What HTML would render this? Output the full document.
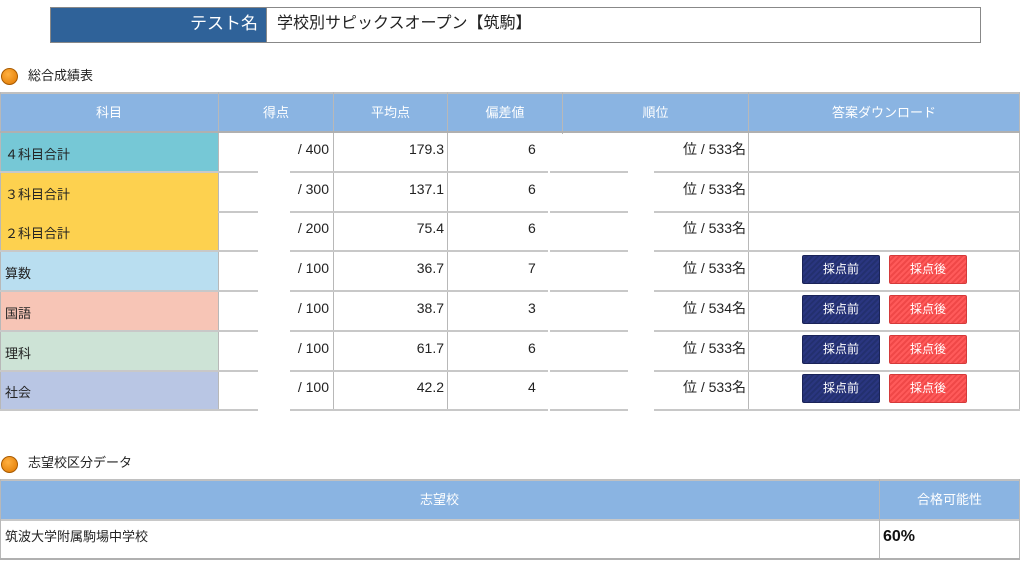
<!DOCTYPE html><html><head><meta charset="utf-8"><style>
body{margin:0;width:1024px;height:563px;background:#fff;font-family:"Liberation Sans","Noto Sans CJK JP",sans-serif;position:relative;overflow:hidden;color:#222}
.a{position:absolute;box-sizing:border-box;line-height:16px}
.h{background:#8ab4e2;color:#fff;font-size:13px;text-align:center;line-height:38px}
.n{font-size:14px;text-align:right}
.r{font-size:14px}
.hl{position:absolute;height:2px;background:#c8c8c8}
.vl{position:absolute;width:1px;background:#b8b8b8}
.btn{position:absolute;width:76px;height:27px;font-size:12px;color:#fff;text-align:center;line-height:27px;border-radius:2px}
.b1{background:repeating-linear-gradient(135deg,#2a3680 0 2px,#23306f 2px 4px);border:1px solid #1a2358}
.b2{background:repeating-linear-gradient(135deg,#ff5a5a 0 2px,#f04848 2px 4px);border:1px solid #d43a3a}
.dot{position:absolute;width:17px;height:17px;border-radius:50%;background:radial-gradient(circle at 40% 35%,#ffb040,#e07800);border:1px solid #a85a00;box-sizing:border-box}
</style></head><body>
<div class="a" style="left:50px;top:7px;width:931px;height:36px;border:1px solid #888"></div>
<div class="a" style="left:51px;top:8px;width:215px;height:34px;background:#2f6299;color:#fff;font-size:17px;text-align:right;padding-right:8px;line-height:32px">テスト名</div>
<div class="a" style="left:266px;top:8px;width:1px;height:34px;background:#888"></div>
<div class="a" style="left:277px;top:8px;font-size:16px;line-height:32px">学校別サピックスオープン【筑駒】</div>

<div class="dot" style="left:1px;top:68px"></div>
<div class="a" style="left:28px;top:66px;font-size:13px;line-height:20px">総合成績表</div>

<div class="a" style="left:0;top:92px;width:1019px;height:2px;background:#c0c0c0"></div>
<div class="a h" style="left:0;top:94px;width:218px;line-height:38px">科目</div>
<div class="a h" style="left:219px;top:94px;width:114px;line-height:38px">得点</div>
<div class="a h" style="left:334px;top:94px;width:113px;line-height:38px">平均点</div>
<div class="a h" style="left:448px;top:94px;width:114px;line-height:38px">偏差値</div>
<div class="a h" style="left:563px;top:94px;width:185px;line-height:38px">順位</div>
<div class="a h" style="left:749px;top:94px;width:270px;line-height:38px">答案ダウンロード</div>

<div class="a" style="left:0;top:132px;width:218px;height:40px;background:#76c8d6"></div>
<div class="a" style="left:0;top:172px;width:218px;height:79px;background:#fdd14f"></div>
<div class="a" style="left:0;top:251px;width:218px;height:40px;background:#b9def0"></div>
<div class="a" style="left:0;top:291px;width:218px;height:40px;background:#f7c5b6"></div>
<div class="a" style="left:0;top:331px;width:218px;height:40px;background:#cde3d6"></div>
<div class="a" style="left:0;top:371px;width:218px;height:39px;background:#b9c6e4"></div>

<div class="vl" style="left:0;top:92px;height:318px"></div>
<div class="vl" style="left:218px;top:92px;height:318px"></div>
<div class="vl" style="left:333px;top:92px;height:318px"></div>
<div class="vl" style="left:447px;top:92px;height:318px"></div>
<div class="vl" style="left:562px;top:92px;height:42px"></div>
<div class="vl" style="left:748px;top:92px;height:318px"></div>
<div class="vl" style="left:1019px;top:92px;height:318px"></div>

<div class="hl" style="left:0;top:131px;width:1020px;background:#b0b0b0"></div>
<div class="hl" style="left:0;top:171px;width:219px"></div><div class="hl" style="left:218px;top:171px;width:40px"></div><div class="hl" style="left:290px;top:171px;width:258px"></div><div class="hl" style="left:550px;top:171px;width:78px"></div><div class="hl" style="left:654px;top:171px;width:366px"></div>
<div class="hl" style="left:218px;top:211px;width:40px"></div><div class="hl" style="left:290px;top:211px;width:258px"></div><div class="hl" style="left:550px;top:211px;width:78px"></div><div class="hl" style="left:654px;top:211px;width:366px"></div>
<div class="hl" style="left:0;top:250px;width:219px"></div><div class="hl" style="left:218px;top:250px;width:40px"></div><div class="hl" style="left:290px;top:250px;width:258px"></div><div class="hl" style="left:550px;top:250px;width:78px"></div><div class="hl" style="left:654px;top:250px;width:366px"></div>
<div class="hl" style="left:0;top:290px;width:219px"></div><div class="hl" style="left:218px;top:290px;width:40px"></div><div class="hl" style="left:290px;top:290px;width:258px"></div><div class="hl" style="left:550px;top:290px;width:78px"></div><div class="hl" style="left:654px;top:290px;width:366px"></div>
<div class="hl" style="left:0;top:330px;width:219px"></div><div class="hl" style="left:218px;top:330px;width:40px"></div><div class="hl" style="left:290px;top:330px;width:258px"></div><div class="hl" style="left:550px;top:330px;width:78px"></div><div class="hl" style="left:654px;top:330px;width:366px"></div>
<div class="hl" style="left:0;top:370px;width:219px"></div><div class="hl" style="left:218px;top:370px;width:40px"></div><div class="hl" style="left:290px;top:370px;width:258px"></div><div class="hl" style="left:550px;top:370px;width:78px"></div><div class="hl" style="left:654px;top:370px;width:366px"></div>
<div class="hl" style="left:0;top:409px;width:219px"></div><div class="hl" style="left:218px;top:409px;width:40px"></div><div class="hl" style="left:290px;top:409px;width:258px"></div><div class="hl" style="left:550px;top:409px;width:78px"></div><div class="hl" style="left:654px;top:409px;width:366px"></div>

<div class="a" style="left:5px;top:147px;font-size:13px">４科目合計</div>
<div class="a" style="left:5px;top:187px;font-size:13px">３科目合計</div>
<div class="a" style="left:5px;top:226px;font-size:13px">２科目合計</div>
<div class="a" style="left:5px;top:266px;font-size:13px">算数</div>
<div class="a" style="left:5px;top:306px;font-size:13px">国語</div>
<div class="a" style="left:5px;top:346px;font-size:13px">理科</div>
<div class="a" style="left:5px;top:385px;font-size:13px">社会</div>

<div class="a n" style="left:220px;top:141px;width:109px">/ 400</div>
<div class="a n" style="left:220px;top:181px;width:109px">/ 300</div>
<div class="a n" style="left:220px;top:220px;width:109px">/ 200</div>
<div class="a n" style="left:220px;top:260px;width:109px">/ 100</div>
<div class="a n" style="left:220px;top:300px;width:109px">/ 100</div>
<div class="a n" style="left:220px;top:340px;width:109px">/ 100</div>
<div class="a n" style="left:220px;top:379px;width:109px">/ 100</div>

<div class="a n" style="left:335px;top:141px;width:109px">179.3</div>
<div class="a n" style="left:335px;top:181px;width:109px">137.1</div>
<div class="a n" style="left:335px;top:220px;width:109px">75.4</div>
<div class="a n" style="left:335px;top:260px;width:109px">36.7</div>
<div class="a n" style="left:335px;top:300px;width:109px">38.7</div>
<div class="a n" style="left:335px;top:340px;width:109px">61.7</div>
<div class="a n" style="left:335px;top:379px;width:109px">42.2</div>

<div class="a n" style="left:528px;top:141px;width:10px;overflow:hidden;text-align:left">6</div>
<div class="a n" style="left:528px;top:181px;width:10px;overflow:hidden;text-align:left">6</div>
<div class="a n" style="left:528px;top:220px;width:10px;overflow:hidden;text-align:left">6</div>
<div class="a n" style="left:528px;top:260px;width:10px;overflow:hidden;text-align:left">7</div>
<div class="a n" style="left:528px;top:300px;width:10px;overflow:hidden;text-align:left">3</div>
<div class="a n" style="left:528px;top:340px;width:10px;overflow:hidden;text-align:left">6</div>
<div class="a n" style="left:528px;top:379px;width:10px;overflow:hidden;text-align:left">4</div>

<div class="a n r" style="left:600px;top:141px;width:146px">位 / 533名</div>
<div class="a n r" style="left:600px;top:181px;width:146px">位 / 533名</div>
<div class="a n r" style="left:600px;top:220px;width:146px">位 / 533名</div>
<div class="a n r" style="left:600px;top:260px;width:146px">位 / 533名</div>
<div class="a n r" style="left:600px;top:300px;width:146px">位 / 534名</div>
<div class="a n r" style="left:600px;top:340px;width:146px">位 / 533名</div>
<div class="a n r" style="left:600px;top:379px;width:146px">位 / 533名</div>

<div class="btn b1" style="left:802px;top:255px">採点前</div><div class="btn b2" style="left:889px;top:255px">採点後</div>
<div class="btn b1" style="left:802px;top:295px">採点前</div><div class="btn b2" style="left:889px;top:295px">採点後</div>
<div class="btn b1" style="left:802px;top:335px">採点前</div><div class="btn b2" style="left:889px;top:335px">採点後</div>
<div class="btn b1" style="left:802px;top:374px">採点前</div><div class="btn b2" style="left:889px;top:374px">採点後</div>

<div class="dot" style="left:1px;top:456px"></div>
<div class="a" style="left:28px;top:453px;font-size:13px;line-height:20px">志望校区分データ</div>
<div class="a" style="left:0;top:479px;width:1019px;height:2px;background:#c0c0c0"></div>
<div class="a h" style="left:0;top:481px;width:879px;line-height:38px">志望校</div>
<div class="a h" style="left:880px;top:481px;width:139px;line-height:38px">合格可能性</div>
<div class="a" style="left:0;top:519px;width:1020px;height:2px;background:#c8c8c8"></div>
<div class="vl" style="left:879px;top:479px;height:80px"></div>
<div class="vl" style="left:1019px;top:479px;height:80px"></div>
<div class="vl" style="left:0;top:479px;height:80px"></div>
<div class="a" style="left:0;top:558px;width:1020px;height:2px;background:#b0b0b0"></div>
<div class="a" style="left:5px;top:529px;font-size:13px">筑波大学附属駒場中学校</div>
<div class="a" style="left:883px;top:528px;font-size:16px;line-height:18px;font-weight:bold;color:#111">60%</div>
</body></html>
